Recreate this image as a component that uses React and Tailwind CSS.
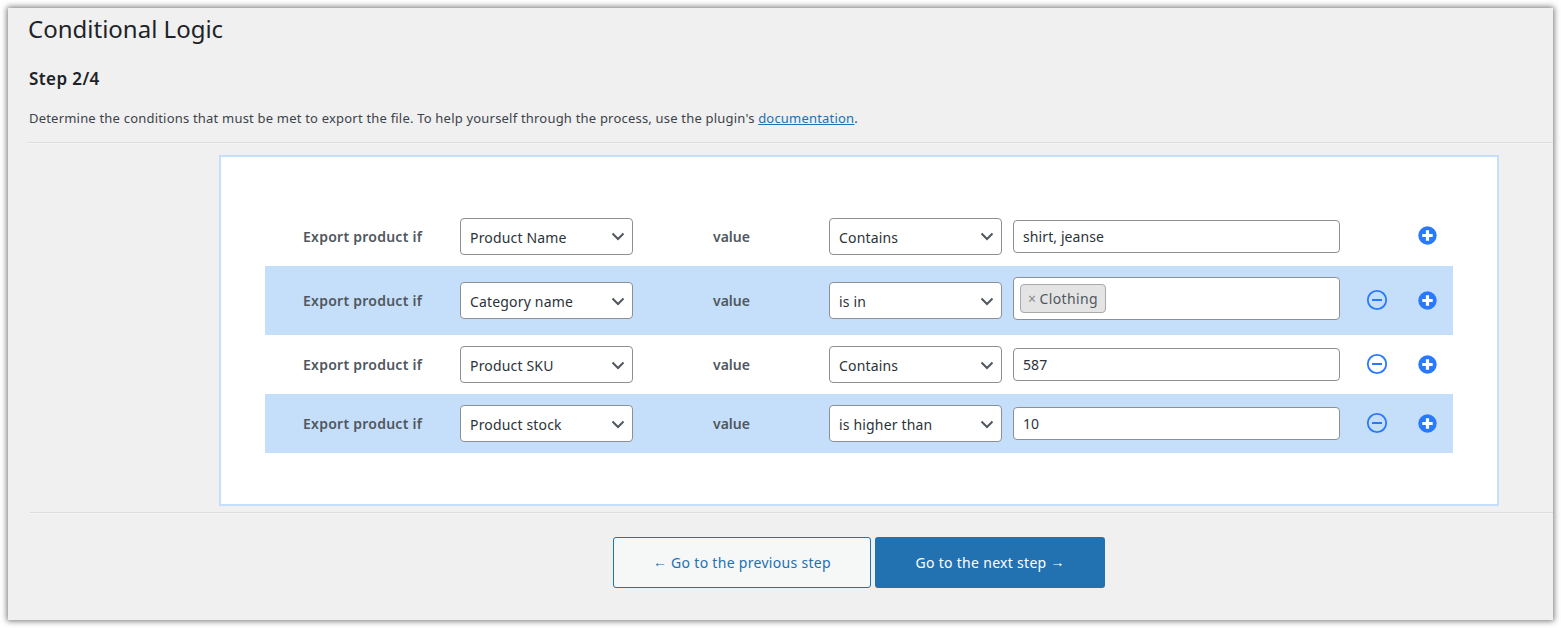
const FONT = "font-['Noto_Sans','Open_Sans',sans-serif]";

function Chevron() {
  return (
    <svg width="16" height="16" viewBox="0 0 16 16" className="shrink-0" fill="none" stroke="#50575e" strokeWidth="2">
      <path d="M2.5 5.5 L8 11 L13.5 5.5" />
    </svg>
  );
}

function Select({ value }) {
  return (
    <div className="flex h-[37px] w-[173px] shrink-0 items-center justify-between rounded-[4px] border border-[#8c8f94] bg-white pl-[9px] pr-[6px] text-[14px] tracking-[0.17px] text-[#2c3338]">
      <span className="pt-[2px]">{value}</span>
      <Chevron />
    </div>
  );
}

function Plus() {
  return (
    <svg width="19" height="19" viewBox="0 0 19 19" className="block">
      <circle cx="9.5" cy="9.5" r="9.2" fill="#2979ff" />
      <path d="M9.5 4.3 V14.7 M4.3 9.5 H14.7" stroke="#fff" strokeWidth="3.2" />
    </svg>
  );
}

function Minus() {
  return (
    <svg width="22" height="22" viewBox="0 0 22 22" className="block" fill="none">
      <circle cx="11" cy="11" r="9.2" stroke="#2979ff" strokeWidth="1.8" />
      <path d="M6 11 H16" stroke="#2979ff" strokeWidth="2" />
    </svg>
  );
}

function Row({ field, op, val, tag, minus = true, blue, height }) {
  return (
    <div className={`flex items-center ${height} ${blue ? "bg-[#c5dffa]" : ""}`}>
      <div className="w-[195px] shrink-0 pl-[38px] text-[14px] font-semibold tracking-[0.25px] text-[#50575e]">Export product if</div>
      <Select value={field} />
      <div className="w-[196px] shrink-0 pl-[80px] text-[14px] font-semibold text-[#50575e]">value</div>
      <Select value={op} />
      {tag ? (
        <div className="mb-[4px] ml-[11px] flex h-[43px] w-[327px] shrink-0 items-center rounded-[4px] border border-[#8c8f94] bg-white text-[14px] tracking-[0.4px] text-[#50575e]">
          <span className="ml-[6px] flex h-[29px] items-center rounded-[4px] border border-[#aaaaaa] bg-[#e4e4e4] px-[7px]">
            <span className="mr-[3px] text-[#888888]">×</span>
            {tag}
          </span>
        </div>
      ) : (
        <div className="ml-[11px] flex h-[33px] w-[327px] shrink-0 items-center rounded-[4px] border border-[#8c8f94] bg-white pl-[9px] text-[14px] tracking-[0.1px] text-[#2c3338]">
          {val}
        </div>
      )}
      <div className="mb-[1px] flex w-[74px] shrink-0 justify-center">{minus && <Minus />}</div>
      <div className="mb-[1px] flex w-[26px] shrink-0 justify-center"><Plus /></div>
    </div>
  );
}

function Arrow({ children }) {
  return <span className="font-['Liberation_Sans',sans-serif] text-[14px] tracking-normal">{children}</span>;
}

export default function App() {
  return (
    <div className={`h-[628px] w-[1561px] overflow-hidden bg-white p-[8px] ${FONT}`}>
      <div className="h-[612px] w-[1545px] bg-[#f0f0f0] pt-[5px] shadow-[0_0_6px_1px_rgba(0,0,0,0.55)]">
        <div className="pl-[20px]">
          <h1 className="h-[32px] text-[24px] leading-[32px] text-[#1d2327]">Conditional Logic</h1>
          <h2 className="ml-[1px] mt-[23px] text-[17px] leading-[22px] font-semibold tracking-[0.4px] text-[#1d2327]">Step 2/4</h2>
          <p className="ml-[1px] mt-[19px] text-[13px] leading-[18px] tracking-[0.2px] text-[#3c434a]">
            Determine the conditions that must be met to export the file. To help yourself through the process, use the plugin's{" "}
            <a className="text-[#2271b1] underline">documentation</a>.
          </p>
          <div className="mt-[15px] h-[2px] border-t border-b border-t-[#dcdcde] border-b-[#f6f6f6]" />
        </div>

        <div className="ml-[211px] mt-[11px] h-[351px] w-[1280px] border-2 border-[#c5dffa] bg-white px-[44px] pt-[49px]">
          <Row field="Product Name" op="Contains" val="shirt, jeanse" minus={false} height="h-[60px]" />
          <Row field="Category name" op="is in" tag="Clothing" blue height="h-[69px]" />
          <Row field="Product SKU" op="Contains" val="587" height="h-[59px]" />
          <Row field="Product stock" op="is higher than" val="10" blue height="h-[59px]" />
        </div>

        <div className="ml-[22px] mt-[6px] h-[2px] border-t border-b border-t-[#dcdcde] border-b-[#f6f6f6]" />

        <div className="mt-[23px] flex justify-start gap-[4px] pl-[605px]">
          <div className="flex h-[51px] w-[258px] items-center justify-center rounded-[3px] border border-[#2271b1] bg-[#f6f7f7] text-[14px] tracking-[0.3px] text-[#2271b1]"><Arrow>←</Arrow><span className="ml-[4px]">Go to the previous step</span></div>
          <div className="flex h-[51px] w-[230px] items-center justify-center rounded-[3px] bg-[#2271b1] text-[14px] tracking-[0.3px] text-white"><span className="mr-[4px]">Go to the next step</span><Arrow>→</Arrow></div>
        </div>
      </div>
    </div>
  );
}
